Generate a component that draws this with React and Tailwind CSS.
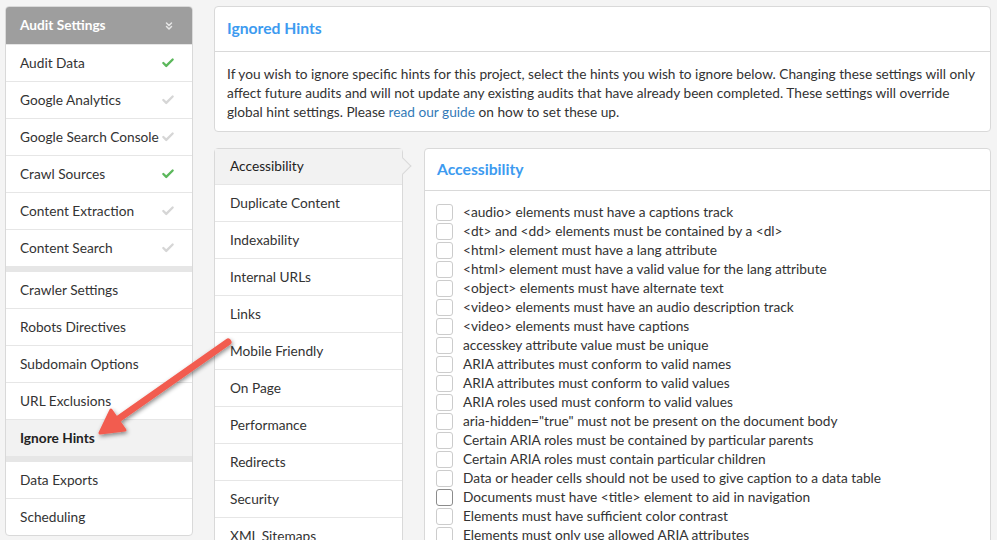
import React from "react";
import { ChevronsDown, Check } from "lucide-react";

const groups = [
  [
    { label: "Audit Data", done: true },
    { label: "Google Analytics", done: false },
    { label: "Google Search Console", done: false },
    { label: "Crawl Sources", done: true },
    { label: "Content Extraction", done: false },
    { label: "Content Search", done: false },
  ],
  [
    { label: "Crawler Settings" },
    { label: "Robots Directives" },
    { label: "Subdomain Options" },
    { label: "URL Exclusions" },
    { label: "Ignore Hints", active: true },
  ],
  [{ label: "Data Exports" }, { label: "Scheduling" }],
];

const categories = [
  "Accessibility",
  "Duplicate Content",
  "Indexability",
  "Internal URLs",
  "Links",
  "Mobile Friendly",
  "On Page",
  "Performance",
  "Redirects",
  "Security",
  "XML Sitemaps",
];

const hints = [
  "<audio> elements must have a captions track",
  "<dt> and <dd> elements must be contained by a <dl>",
  "<html> element must have a lang attribute",
  "<html> element must have a valid value for the lang attribute",
  "<object> elements must have alternate text",
  "<video> elements must have an audio description track",
  "<video> elements must have captions",
  "accesskey attribute value must be unique",
  "ARIA attributes must conform to valid names",
  "ARIA attributes must conform to valid values",
  "ARIA roles used must conform to valid values",
  'aria-hidden="true" must not be present on the document body',
  "Certain ARIA roles must be contained by particular parents",
  "Certain ARIA roles must contain particular children",
  "Data or header cells should not be used to give caption to a data table",
  "Documents must have <title> element to aid in navigation",
  "Elements must have sufficient color contrast",
  "Elements must only use allowed ARIA attributes",
];

const Sidebar = () => (
  <div className="w-[188px] shrink-0 self-start rounded-[4px] border border-[#d9d9d9] bg-white overflow-hidden">
    <div className="flex h-[37px] items-center justify-between bg-[#9e9e9e] pl-[14px] pr-[17px] text-[13.7px] font-bold text-white">
      <span>Audit Settings</span>
      <ChevronsDown size={12} strokeWidth={3} className="text-[#e6e6e6]" />
    </div>
    {groups.map((group, gi) => (
      <div key={gi}>
        {gi > 0 && <div className="h-[5px] bg-[#e6e6e6]" />}
        {group.map((item) => (
          <div
            key={item.label}
            className={
              "flex h-[37px] items-center justify-between border-t border-[#e6e6e6] pl-[14px] pr-[17px] text-[13.7px] whitespace-nowrap " +
              (item.active ? "bg-[#f2f2f2] font-bold text-[#222]" : "text-[#333]")
            }
          >
            <span>{item.label}</span>
            {item.done !== undefined && (
              <Check
                size={14}
                strokeWidth={4}
                className={"shrink-0 " + (item.done ? "text-[#5cb85c]" : "text-[#d6d6d6]")}
              />
            )}
          </div>
        ))}
      </div>
    ))}
  </div>
);

const App = () => {
  return (
    <div
      className="relative flex h-[540px] w-[997px] overflow-hidden bg-[#f4f4f4] pl-[5px] pt-[6px] pr-[6px]"
      style={{ fontFamily: "Lato, 'Liberation Sans', sans-serif" }}
    >
      <Sidebar />

      <div className="ml-[21px] flex min-w-0 flex-1 flex-col gap-[16px]">
        <div className="rounded-[4px] border border-[#d9d9d9] bg-white">
          <div className="h-[45px] border-b border-[#d9d9d9] px-[12px] pt-[11px] text-[15.7px] leading-[20px] font-bold text-[#3d9bf0]">
            Ignored Hints
          </div>
          <p className="px-[12px] pt-[12px] pb-[10px] text-[13.7px] leading-[19px] text-[#333]">
            If you wish to ignore specific hints for this project, select the hints you wish to
            ignore below. Changing these settings will only affect future audits and will not update
            any existing audits that have already been completed. These settings will override global
            hint settings. Please <span className="text-[#337ab7]">read our guide</span> on how to set
            these up.
          </p>
        </div>

        <div className="flex gap-[21px]">
          <div className="w-[189px] shrink-0 self-start rounded-[4px] border border-[#d9d9d9] bg-white">
            {categories.map((c, i) => (
              <div
                key={c}
                className={
                  "relative flex items-center pl-[15px] text-[13.7px] " +
                  (i > 0 ? "h-[37px] border-t border-[#e6e6e6] text-[#333]" : "h-[35px] bg-[#f2f2f2] text-[#222]")
                }
              >
                {c}
                {i === 0 && (
                  <span className="absolute right-[-7px] top-[11px] h-[12px] w-[12px] rotate-45 border-t border-r border-[#d9d9d9] bg-[#f2f2f2]" />
                )}
              </div>
            ))}
          </div>

          <div className="min-w-0 flex-1 rounded-[4px] border border-[#d9d9d9] bg-white">
            <div className="h-[42px] border-b border-[#d9d9d9] px-[12px] pt-[10px] text-[15.7px] leading-[20px] font-bold text-[#3d9bf0]">
              Accessibility
            </div>
            <div className="flex flex-col pl-[11px] pt-[12px]">
              {hints.map((h, i) => (
                <label key={h} className="flex h-[19px] items-center gap-[10px] text-[13.7px] text-[#333]">
                  <span
                    className={
                      "h-[17px] w-[17px] shrink-0 rounded-[3px] border bg-white " +
                      (i === 15 ? "border-[#8c8c8c]" : "border-[#cccccc]")
                    }
                  />
                  <span className="whitespace-nowrap">{h}</span>
                </label>
              ))}
            </div>
          </div>
        </div>
      </div>

      <svg className="pointer-events-none absolute left-0 top-0" width="997" height="540">
        <defs>
          <filter id="sh" x="-20%" y="-20%" width="140%" height="140%">
            <feDropShadow dx="1" dy="2" stdDeviation="2" floodColor="#000" floodOpacity="0.45" />
          </filter>
        </defs>
        <g filter="url(#sh)" fill="#f25c50" stroke="#f25c50">
          <line x1="228" y1="342" x2="114" y2="422" strokeWidth="7" strokeLinecap="round" />
          <polygon points="100,433 111,410 125,430" strokeWidth="3" strokeLinejoin="round" />
        </g>
      </svg>
    </div>
  );
};

export default App;
